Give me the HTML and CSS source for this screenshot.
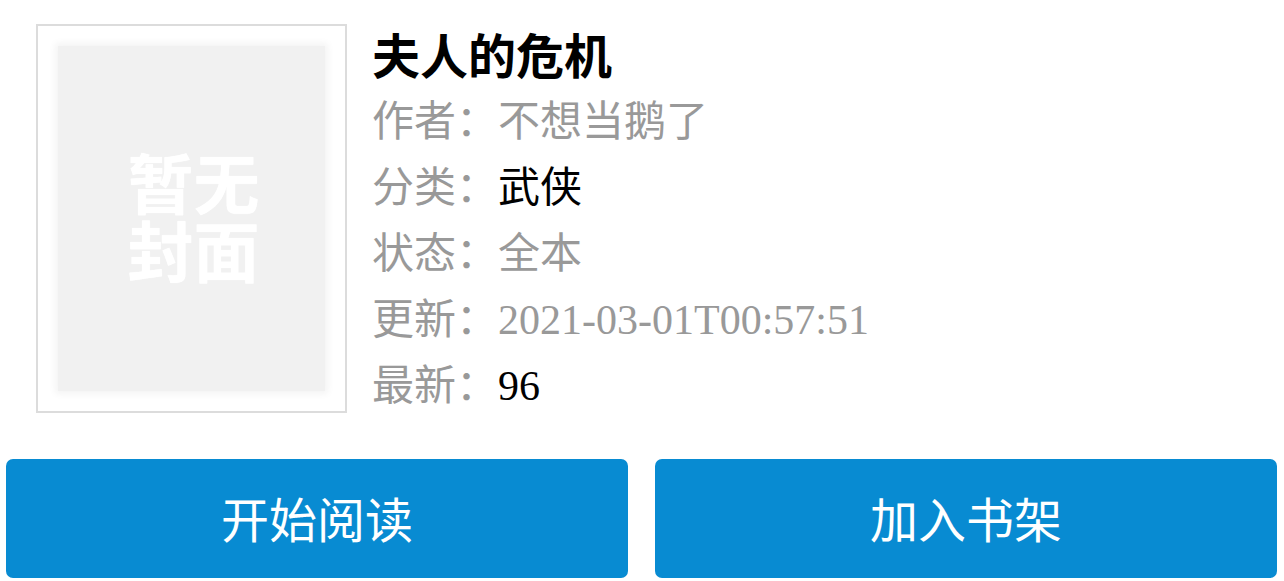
FILE: index.html
```html
<!DOCTYPE html>
<html lang="zh-CN">
<head>
<meta charset="utf-8">
<title>夫人的危机</title>
<link rel="stylesheet" href="styles.css">
</head>
<body>
<div class="page">
  <div class="book">
    <div class="cover">
      <div class="cover-img">
        <div class="cover-text">暂无<br>封面</div>
      </div>
    </div>
    <div class="info">
      <h1 class="title">夫人的危机</h1>
      <div class="row"><span class="label">作者：</span><span class="val gray">不想当鹅了</span></div>
      <div class="row"><span class="label">分类：</span><span class="val dark">武侠</span></div>
      <div class="row"><span class="label">状态：</span><span class="val gray">全本</span></div>
      <div class="row"><span class="label">更新：</span><span class="val gray">2021-03-01T00:57:51</span></div>
      <div class="row"><span class="label">最新：</span><span class="val dark">96</span></div>
    </div>
  </div>
  <div class="actions">
    <a class="btn">开始阅读</a>
    <a class="btn">加入书架</a>
  </div>
</div>
</body>
</html>
```

FILE: styles.css
```css
html, body {
  margin: 0;
  padding: 0;
  background: #ffffff;
}

body {
  font-family: "Liberation Serif", "Noto Sans CJK SC", serif;
  color: #000;
}

.page {
  width: 1284px;
  height: 581px;
  overflow: hidden;
}

.book {
  display: flex;
  flex-direction: row;
  align-items: flex-start;
  height: 391px;
  padding: 24px 0 0 36px;
  gap: 25px;
}

.cover {
  width: 307px;
  height: 385px;
  border: 2px solid #dcdcdc;
  background: #ffffff;
  box-sizing: content-box;
  display: flex;
}

.cover-img {
  margin: 20px;
  flex: 1;
  background: #f1f1f1;
  box-shadow: 0 0 7px 3px #f4f4f4;
  display: flex;
  align-items: center;
  justify-content: center;
}

.cover-text {
  font-family: "Noto Sans CJK SC", sans-serif;
  font-weight: 700;
  font-size: 66px;
  line-height: 68px;
  color: #ffffff;
  text-align: center;
  margin-top: -10px;
  margin-left: 4px;
  text-shadow: 0 0 1px #ffffff;
}

.info {
  display: flex;
  flex-direction: column;
}

.title {
  margin: 0 0 3px 0;
  font-family: "Noto Sans CJK SC", sans-serif;
  font-weight: 700;
  font-size: 48px;
  line-height: 58px;
  color: #000;
}

.row {
  display: flex;
  align-items: baseline;
  height: 66px;
  font-size: 42px;
  line-height: 66px;
  white-space: nowrap;
}

.label {
  font-family: "Noto Sans CJK SC", sans-serif;
  color: #999999;
}

.val.gray {
  color: #999999;
}

.val.dark {
  color: #000000;
}

.actions {
  display: flex;
  gap: 27px;
  padding: 0 7px 0 6px;
  margin-top: 44px;
}

.btn {
  flex: 1;
  height: 119px;
  box-sizing: border-box;
  padding-bottom: 4px;
  background: #088bd2;
  border-radius: 7px;
  color: #ffffff;
  font-family: "Noto Sans CJK SC", sans-serif;
  font-size: 48px;
  display: flex;
  align-items: center;
  justify-content: center;
  text-decoration: none;
}
```
